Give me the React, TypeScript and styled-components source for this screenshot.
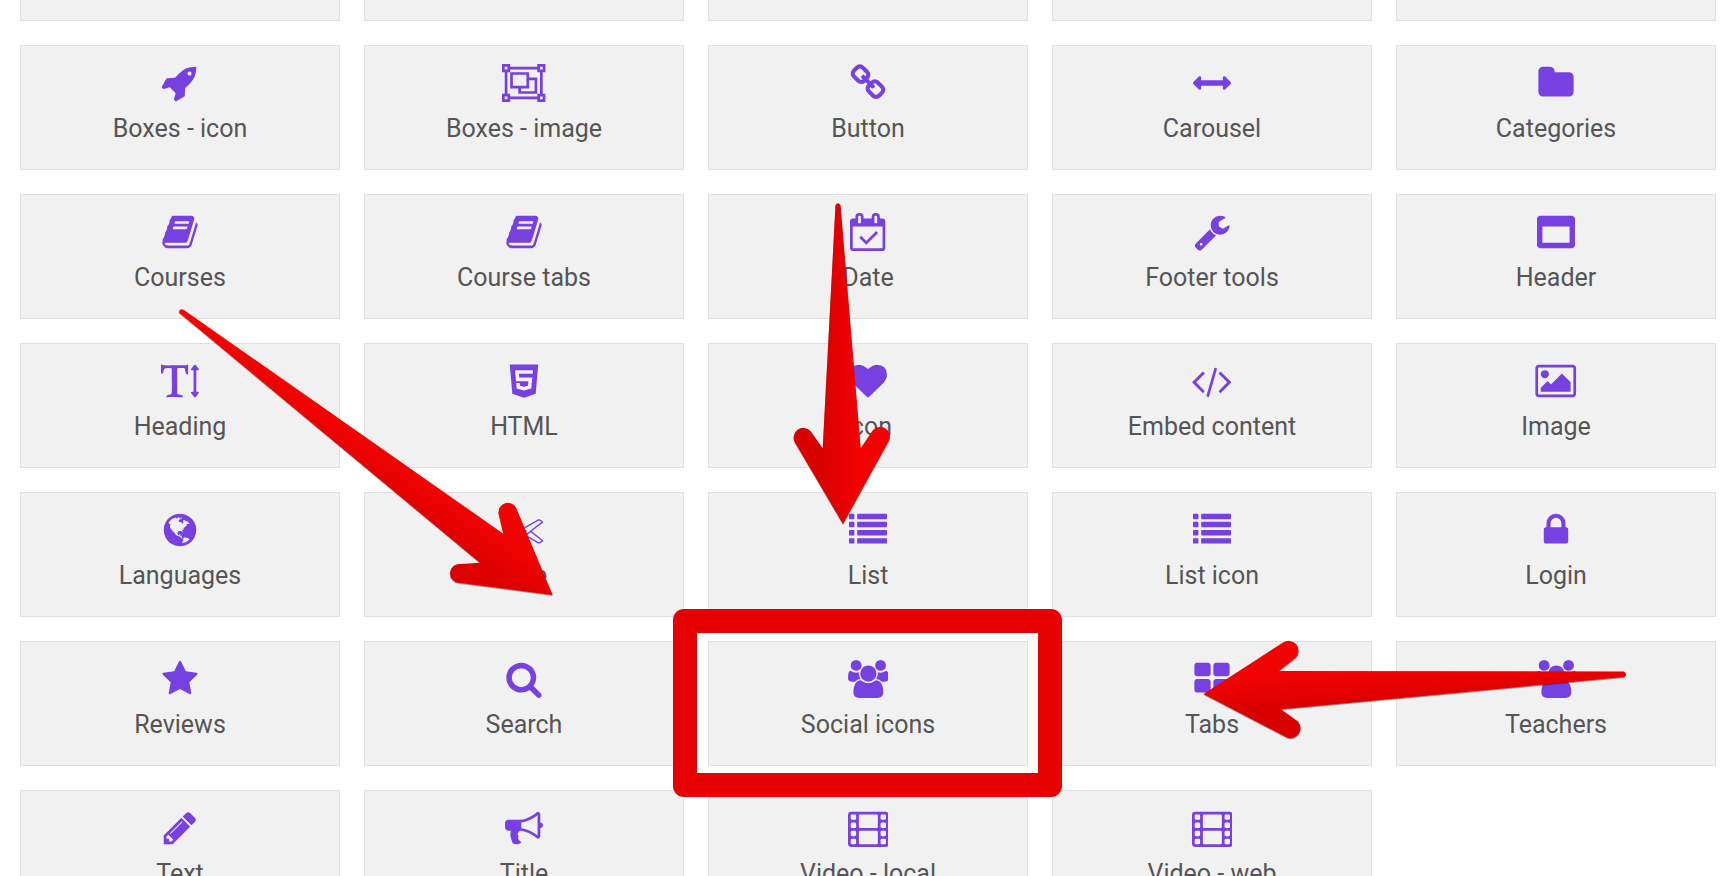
import React from "react";
import styled, { createGlobalStyle } from "styled-components";
import { FaHtml5 } from "react-icons/fa";

const GlobalStyle = createGlobalStyle`
  *, *::before, *::after { box-sizing: border-box; }
  html, body { margin: 0; padding: 0; background: #ffffff; }
  body { font-family: Roboto, "Liberation Sans", sans-serif; color: #555555; }
`;

const Viewport = styled.main`
  position: relative;
  height: 100vh;
  overflow: hidden;
`;

/* The picker is scrolled so that its first row is mostly above the fold. */
const WidgetGrid = styled.div`
  display: grid;
  grid-template-columns: repeat(5, minmax(0, 1fr));
  grid-auto-rows: 125px;
  gap: 24px;
  margin-top: -104px;
  padding: 0 18px 24px 20px;
`;

const WidgetCard = styled.button`
  position: relative;
  display: flex;
  flex-direction: column;
  align-items: center;
  gap: 12px;
  margin: 0;
  padding: 18px 8px;
  border: 1px solid #e0e0e0;
  border-radius: 0;
  background: #f1f1f1;
  color: inherit;
  font-family: inherit;
  cursor: pointer;
`;

const WidgetIcon = styled.span`
  display: flex;
  height: 38px;
  color: #7641e0;

  svg {
    display: block;
    width: auto;
    height: 38px;
  }
`;

const WidgetLabel = styled.span`
  font-size: 25px;
  line-height: 30px;
  white-space: nowrap;
`;

const HighlightFrame = styled.span`
  position: absolute;
  inset: -33px -35px -32px -36px;
  z-index: 2;
  border: 24px solid #e60000;
  border-radius: 11px;
  pointer-events: none;
`;

const ArrowLayer = styled.svg`
  position: absolute;
  top: 0;
  left: 0;
  z-index: 3;
  pointer-events: none;
  filter: drop-shadow(0 1px 0 rgba(90, 0, 0, 0.45));
`;

type Glyph = { width: number; d: string };

const glyphs: Record<string, Glyph> = {
  rocket: {
    width: 1792,
    d: "M1440 448q0-40-28-68t-68-28-68 28-28 68 28 68 68 28 68-28 28-68zm224-288q0 249-75.5 430.5t-253.5 360.5q-81 80-195 176l-20 379q-2 16-16 26l-384 224q-7 4-16 4-12 0-23-9l-64-64q-13-14-8-32l85-276-281-281-276 85q-3 1-9 1-14 0-23-9l-64-64q-17-19-5-39l224-384q10-14 26-16l379-20q96-114 176-195 188-187 358-258t431-71q14 0 24 9.5t10 22.5z",
  },
  objectGroup: {
    width: 2048,
    d: "M2048 384h-128v1024h128v384h-384v-128h-1280v128h-384v-384h128v-1024h-128v-384h384v128h1280v-128h384v384zm-256-256v128h128v-128h-128zm-1664 0v128h128v-128h-128zm128 1536v-128h-128v128h128zm1408-128v-128h128v-1024h-128v-128h-1280v128h-128v1024h128v128h1280zm256 128v-128h-128v128h128zm-640-1024h384v768h-896v-256h-384v-768h896v256zm-768 384h640v-512h-640v512zm1024 256v-512h-256v384h-384v128h640z",
  },
  link: {
    width: 1792,
    d: "M1520 1216q0-40-28-68l-208-208q-28-28-68-28-42 0-72 32 3 3 19 18.5t21.5 21.5 15 19 13 25.5 3.5 27.5q0 40-28 68t-68 28q-15 0-27.5-3.5t-25.5-13-19-15-21.5-21.5-18.5-19q-33 31-33 73 0 40 28 68l206 207q27 27 68 27 40 0 68-26l147-146q28-28 28-67zm-703-705q0-40-28-68l-206-207q-28-28-68-28-39 0-68 27l-147 146q-28 28-28 67 0 40 28 68l208 208q27 27 68 27 42 0 72-31-3-3-19-18.5t-21.5-21.5-15-19-13-25.5-3.5-27.5q0-40 28-68t68-28q15 0 27.5 3.5t25.5 13 19 15 21.5 21.5 18.5 19q33-31 33-73zm895 705q0 120-85 203l-147 146q-83 83-203 83-121 0-204-85l-206-207q-83-83-83-203 0-123 88-209l-88-88q-86 88-208 88-120 0-204-84l-208-208q-84-84-84-204t85-203l147-146q83-83 203-83 121 0 204 85l206 207q83 83 83 203 0 123-88 209l88 88q86-88 208-88 120 0 204 84l208 208q84 84 84 204z",
  },
  arrows: {
    width: 1792,
    d: "M1792 896q0 26-19 45l-256 256q-19 19-45 19t-45-19-19-45v-128h-1024v128q0 26-19 45t-45 19-45-19l-256-256q-19-19-19-45t19-45l256-256q19-19 45-19t45 19 19 45v128h1024v-128q0-26 19-45t45-19 45 19l256 256q19 19 19 45z",
  },
  folder: {
    width: 1792,
    d: "M1728 608v704q0 92-66 158t-158 66h-1216q-92 0-158-66t-66-158v-960q0-92 66-158t158-66h320q92 0 158 66t66 158v32h672q92 0 158 66t66 158z",
  },
  book: {
    width: 1792,
    d: "M1703 478q40 57 18 129l-275 906q-19 64-76.5 107.5t-122.5 43.5h-923q-77 0-148.5-53.5t-99.5-131.5q-24-67-2-127 0-4 3-27t4-37q1-8-3-21.5t-3-19.5q2-11 8-21t16.5-23.5 16.5-23.5q23-38 45-91.5t30-91.5q3-10 .5-30t-.5-28q3-11 17-28t17-23q21-36 42-92t25-90q1-9-2.5-32t.5-28q4-13 22-30.5t22-22.5q19-26 42.5-84.5t27.5-96.5q1-8-3-25.5t-2-26.5q2-8 9-18t18-23 17-21q8-12 16.5-30.5t15-35 16-36 19.5-32 26.5-23.5 36-11.5 47.5 5.5l-1 3q38-9 51-9h761q74 0 114 56t18 130l-274 906q-36 119-71.5 153.5t-128.5 34.5h-869q-27 0-38 15-11 16-1 43 24 70 144 70h923q29 0 56-15.5t35-41.5l300-987q7-22 5-57 38 15 59 43zm-1064 2q-4 13 2 22.5t20 9.5h608q13 0 25.5-9.5t16.5-22.5l21-64q4-13-2-22.5t-20-9.5h-608q-13 0-25.5 9.5t-16.5 22.5zm-83 256q-4 13 2 22.5t20 9.5h608q13 0 25.5-9.5t16.5-22.5l21-64q4-13-2-22.5t-20-9.5h-608q-13 0-25.5 9.5t-16.5 22.5z",
  },
  calendar: {
    width: 1664,
    d: "M1303 964l-512 512q-10 9-23 9t-23-9l-288-288q-9-10-9-23t9-22l46-46q9-9 22-9t23 9l220 220 444-444q10-9 23-9t22 9l46 46q9 9 9 22t-9 23zm-1175 700h1408v-1024h-1408v1024zm384-1216v-288q0-14-9-23t-23-9h-64q-14 0-23 9t-9 23v288q0 14 9 23t23 9h64q14 0 23-9t9-23zm768 0v-288q0-14-9-23t-23-9h-64q-14 0-23 9t-9 23v288q0 14 9 23t23 9h64q14 0 23-9t9-23zm384-64v1280q0 52-38 90t-90 38h-1408q-52 0-90-38t-38-90v-1280q0-52 38-90t90-38h128v-96q0-66 47-113t113-47h64q66 0 113 47t47 113v96h384v-96q0-66 47-113t113-47h64q66 0 113 47t47 113v96h128q52 0 90 38t38 90z",
  },
  wrench: {
    width: 1792,
    d: "M448 1472q0-26-19-45t-45-19-45 19-19 45 19 45 45 19 45-19 19-45zm644-420l-682 682q-37 37-90 37-52 0-91-37l-106-108q-38-36-38-90 0-53 38-91l681-681q39 98 114.5 173.5t173.5 114.5zm634-435q0 39-23 106-47 134-164.5 217.5t-258.5 83.5q-185 0-316.5-131.5t-131.5-316.5 131.5-316.5 316.5-131.5q58 0 121.5 16.5t107.5 46.5q16 11 16 28t-16 28l-293 169v224l193 107q5-3 79-48.5t135.5-81 70.5-35.5q15 0 23.5 10t8.5 25z",
  },
  window: {
    width: 1792,
    d: "M256 1408h1280v-768h-1280v768zm1536-1120v1216q0 66-47 113t-113 47h-1472q-66 0-113-47t-47-113v-1216q0-66 47-113t113-47h1472q66 0 113 47t47 113z",
  },
  textHeight: {
    width: 1792,
    d: "M1744 1408q33 0 42 18.5t-11 44.5l-126 162q-20 26-49 26t-49-26l-126-162q-20-26-11-44.5t42-18.5h80v-1024h-80q-33 0-42-18.5t11-44.5l126-162q20-26 49-26t49 26l126 162q20 26 11 44.5t-42 18.5h-80v1024h80zm-1663-1279l54 27q12 5 211 5 44 0 132-2t132-2q36 0 107.5.5t107.5.5h293q6 0 21 .5t20.5 0 16-3 17.5-9 15-17.5l42-1q4 0 14 .5t14 .5q2 112 2 336 0 80-5 109-39 14-68 18-25-44-54-128-3-9-11-48t-14.5-73.5-7.5-35.5q-6-8-12-12.5t-15.5-6-13-2.5-18-.5-16.5.5q-17 0-66.5-.5t-74.5-.5-64 2-71 6q-9 81-8 136 0 94 2 388t2 455q0 16-2.5 71.5t0 91.5 12.5 69q40 21 124 42.5t120 37.5q5 40 5 50 0 14-3 29l-34 1q-76 2-218-8t-207-10q-50 0-151 9t-152 9q-3-51-3-52v-9q17-27 61.5-43t98.5-29 78-27q19-42 19-383 0-101-3-303t-3-303v-117q0-2 .5-15.5t.5-25-1-25.5-3-24-5-14q-11-12-162-12-33 0-93 12t-80 26q-19 13-34 72.5t-31.5 111-42.5 53.5q-42-26-56-44v-383z",
  },
  heart: {
    width: 1792,
    d: "M896 1664q-26 0-44-18l-624-602q-10-8-27.5-26t-55.5-65.5-68-97.5-53.5-121-23.5-138q0-220 127-344t351-124q62 0 126.5 21.5t120 58 95.5 68.5 76 68q36-36 76-68t95.5-68.5 120-58 126.5-21.5q224 0 351 124t127 344q0 221-229 450l-623 600q-18 18-44 18z",
  },
  code: {
    width: 2048,
    d: "M681 1399l-50 50q-10 10-23 10t-23-10l-466-466q-10-10-10-23t10-23l466-466q10-10 23-10t23 10l50 50q10 10 10 23t-10 23l-393 393 393 393q10 10 10 23t-10 23zm591-1067l-373 1291q-4 13-15.5 19.5t-23.5 2.5l-62-17q-13-4-19.5-15.5t-2.5-24.5l373-1291q4-13 15.5-19.5t23.5-2.5l62 17q13 4 19.5 15.5t2.5 24.5zm657 651l-466 466q-10 10-23 10t-23-10l-50-50q-10-10-10-23t10-23l393-393-393-393q-10-10-10-23t10-23l50-50q10-10 23-10t23 10l466 466q10 10 10 23t-10 23z",
  },
  image: {
    width: 2048,
    d: "M704 576q0 80-56 136t-136 56-136-56-56-136 56-136 136-56 136 56 56 136zm1024 384v448h-1408v-192l320-320 160 160 512-512zm96-704h-1600q-13 0-22.5 9.5t-9.5 22.5v1216q0 13 9.5 22.5t22.5 9.5h1600q13 0 22.5-9.5t9.5-22.5v-1216q0-13-9.5-22.5t-22.5-9.5zm160 32v1216q0 66-47 113t-113 47h-1600q-66 0-113-47t-47-113v-1216q0-66 47-113t113-47h1600q66 0 113 47t47 113z",
  },
  globe: {
    width: 1792,
    d: "M896 128q209 0 385.5 103t279.5 279.5 103 385.5-103 385.5-279.5 279.5-385.5 103-385.5-103-279.5-279.5-103-385.5 103-385.5 279.5-279.5 385.5-103zm274 521q-2 1-9.5 9.5t-13.5 9.5q2 0 4.5-5t5-11 3.5-7q6-7 22-15 14-6 52-12 34-8 51 11-2-2 9.5-13t14.5-12q3-2 15-4.5t15-7.5l2-22q-12 1-17.5-7t-6.5-21q0 2-6 8 0-7-4.5-8t-11.5 1-9 1q-10-3-15-7.5t-8-16.5-4-15q-2-5-9.5-11t-9.5-10q-1-2-2.5-5.5t-3-6.5-4-5.5-5.5-2.5-7 5-7.5 10-4.5 5q-3-2-6-1.5t-4.5 1-4.5 3-5 3.5q-3 2-8.5 3t-8.5 2q15-5-1-11-10-4-16-3 9-4 7.5-12t-8.5-14h5q-1-4-8.5-8.5t-17.5-8.5-13-6q-8-5-34-9.5t-33-.5q-5 6-4.5 10.5t4 14 3.5 12.5q1 6-5.5 13t-6.5 12q0 7 14 15.5t10 21.5q-3 8-16 16t-16 12q-5 8-1.5 18.5t10.5 16.5q2 2 1.5 4t-3.5 4.5-5.5 4-6.5 3.5l-3 2q-11 5-20.5-6t-13.5-26q-7-25-16-30-23-8-29 1-5-13-41-26-25-9-58-4 6-1 0-15-7-15-19-12 3-6 4-17.5t1-13.5q3-13 12-23 1-1 7-8.5t9.5-13.5.5-6q35 4 50-11 5-5 11.5-17t10.5-17q9-6 14-5.5t14.5 5.5 14.5 5q14 1 15.5-11t-7.5-20q12 1 3-17-4-7-8-9-12-4-27 5-8 4 2 8-1-1-9.5 10.5t-16.5 17.5-16-5q-1-1-5.5-13.5t-9.5-13.5q-8 0-16 15 3-8-11-15t-24-8q19-12-8-27-7-4-20.5-5t-19.5 4q-5 7-5.5 11.5t5 8 10.5 5.5 11.5 4 8.5 3q14 10 8 14-2 1-8.5 3.5t-11.5 4.5-6 4q-3 4 0 14t-2 14q-5-5-9-17.5t-7-16.5q7 9-25 6l-10-1q-4 0-16 2t-20.5 1-13.5-8q-4-8 0-20 1-4 4-2-4-3-11-9.5t-10-8.5q-46 15-94 41 6 1 12-1 5-2 13-6.5t10-5.5q34-14 42-7l5-5q14 16 20 25-7-4-30-1-20 6-22 12 7 12 5 18-4-3-11.5-10t-14.5-11-15-5q-16 0-22 1-146 80-235 222 7 7 12 8 4 1 5 9t2.5 11 11.5-3q9 8 3 19 1-1 44 27 19 17 21 21 3 11-10 18-1-2-9-9t-9-4q-3 5 .5 18.5t10.5 12.5q-7 0-9.5 16t-2.5 35.5-1 23.5l2 1q-3 12 5.5 34.5t21.5 19.5q-13 3 20 43 6 8 8 9 3 2 12 7.5t15 10 10 10.5q4 5 10 22.5t14 23.5q-2 6 9.5 20t10.5 23q-1 0-2.5 1t-2.5 1q3 7 15.5 14t15.5 13q1 3 2 10t3 11 8 2q2-20-24-62-15-25-17-29-3-5-5.5-15.5t-4.5-14.5q2 0 6 1.5t8.5 3.5 7.5 4 2 3q-3 7 2 17.5t12 18.5 17 19 12 13q6 6 14 19.5t0 13.5q9 0 20 10.5t17 19.5q5 8 8 26t5 24q2 7 8.5 13.5t12.5 9.5l16 8 13 7q5 2 18.5 10.5t21.5 11.5q10 4 16 4t14.5-2.5 13.5-3.5q15-2 29 15t21 21q36 19 55 11-2 1 .5 7.5t8 15.5 9 14.5 5.5 8.5q5 6 18 15t18 15q6-4 7-9-3 8 7 20t18 10q14-3 14-32-31 15-49-18 0-1-2.5-5.5t-4-8.5-2.5-8.5 0-7.5 5-3q9 0 10-3.5t-2-12.5-4-13q-1-8-11-20t-12-15q-5 9-16 8t-16-9q0 1-1.5 5.5t-1.5 6.5q-13 0-15-1 1-3 2.5-17.5t3.5-22.5q1-4 5.5-12t7.5-14.5 4-12.5-4.5-9.5-17.5-2.5q-19 1-26 20-1 3-3 10.5t-5 11.5-9 7q-7 3-24 2t-24-5q-13-8-22.5-29t-9.5-37q0-10 2.5-26.5t3-25-5.5-24.5q3-2 9-9.5t10-10.5q2-1 4.5-1.5t4.5 0 4-1.5 3-6q-1-1-4-3-3-3-4-3 7 3 28.5-1.5t27.5 1.5q15 11 22-2 0-1-2.5-9.5t-.5-13.5q5 27 29 9 3 3 15.5 5t17.5 5q3 2 7 5.5t5.5 4.5 5-.5 8.5-6.5q10 14 12 24 11 40 19 44 7 3 11 2t4.5-9.5 0-14-1.5-12.5l-1-8v-18l-1-8q-15-3-18.5-12t1.5-18.5 15-18.5q1-1 8-3.5t15.5-6.5 12.5-8q21-19 15-35 7 0 11-9-1 0-5-3t-7.5-5-4.5-2q9-5 2-16 5-3 7.5-11t7.5-10q9 12 21 2 8-8 1-16 5-7 20.5-10.5t18.5-9.5q7 2 8-2t1-12 3-12q4-5 15-9t13-5l17-11q3-4 0-4 18 2 31-11 10-11-6-20 3-6-3-9.5t-15-5.5q3-1 11.5-.5t10.5-1.5q15-10-7-16-17-5-43 12zm-163 877q206-36 351-189-3-3-12.5-4.5t-12.5-3.5q-18-7-24-8 1-7-2.5-13t-8-9-12.5-8-11-7q-2-2-7-6t-7-5.5-7.5-4.5-8.5-2-10 1l-3 1q-3 1-5.5 2.5t-5.5 3-4 3 0 2.5q-21-17-36-22-5-1-11-5.5t-10.5-7-10-1.5-11.5 7q-5 5-6 15t-2 13q-7-5 0-17.5t2-18.5q-3-6-10.5-4.5t-12 4.5-11.5 8.5-9 6.5-8.5 5.5-8.5 7.5q-3 4-6 12t-5 11q-2-4-11.5-6.5t-9.5-5.5q2 10 4 35t5 38q7 31-12 48-27 25-29 40-4 22 12 26 0 7-8 20.5t-7 21.5q0 6 2 16z",
  },
  scissors: {
    width: 1792,
    d: "M960 896q26 0 45 19t19 45-19 45-45 19-45-19-19-45 19-45 45-19zm300 64l507 398q28 20 25 56-5 35-35 51l-128 64q-13 7-29 7-17 0-31-8l-690-387-110 66q-8 4-12 5 14 49 10 97-7 77-56 147.5t-132 123.5q-132 84-277 84-136 0-222-78-90-84-79-207 7-76 56-147t131-124q132-84 278-84 83 0 151 31 9-13 22-22l122-73-122-73q-13-9-22-22-68 31-151 31-146 0-278-84-82-53-131-124t-56-147q-5-59 15.5-113t63.5-93q85-79 222-79 145 0 277 84 83 52 132 123t56 148q4 48-10 97 4 1 12 5l110 66 690-387q14-8 31-8 16 0 29 7l128 64q30 16 35 51 3 36-25 56zm-681-260q46-42 21-108t-106-117q-92-59-192-59-74 0-113 36-46 42-21 108t106 117q92 59 192 59 74 0 113-36zm-85 745q81-51 106-117t-21-108q-39-36-113-36-100 0-192 59-81 51-106 117t21 108q39 36 113 36 100 0 192-59zm178-613l96 58v-11q0-36 33-56l14-8-79-44-26 26q-3 3-10 11t-12 12q-2 2-4 3.5t-3 2.5zm224 224l96 32 736-576-128-64-768 431v113l-160 96 9 8q2 2 7 6 4 4 11 12t11 12l26 26zm704 416l128-64-520-408-177 138q-2 3-13 7z",
  },
  list: {
    width: 1792,
    d: [128, 512, 896, 1280]
      .map(
        (y) =>
          `M32 ${y}h192q32 0 32 32v192q0 32-32 32h-192q-32 0-32-32v-192q0-32 32-32z` +
          `M416 ${y}h1344q32 0 32 32v192q0 32-32 32h-1344q-32 0-32-32v-192q0-32 32-32z`
      )
      .join(""),
  },
  lock: {
    width: 1792,
    d: "M640 768h512v-192q0-106-75-181t-181-75-181 75-75 181v192zm832 96v576q0 40-28 68t-68 28h-960q-40 0-68-28t-28-68v-576q0-40 28-68t68-28h32v-192q0-184 132-316t316-132 316 132 132 316v192h32q40 0 68 28t28 68z",
  },
  star: {
    width: 1792,
    d: "M1728 647q0 22-26 48l-363 354 86 500q1 7 1 20 0 21-10.5 35.5t-30.5 14.5q-19 0-40-12l-449-236-449 236q-22 12-40 12-21 0-31.5-14.5t-10.5-35.5q0-6 2-20l86-500-364-354q-25-27-25-48 0-37 56-46l502-73 225-455q19-41 49-41t49 41l225 455 502 73q56 9 56 46z",
  },
  search: {
    width: 1792,
    d: "M1216 832q0-185-131.5-316.5t-316.5-131.5-316.5 131.5-131.5 316.5 131.5 316.5 316.5 131.5 316.5-131.5 131.5-316.5zm512 832q0 52-38 90t-90 38q-54 0-90-38l-343-342q-179 124-399 124-143 0-273.5-55.5t-225-150-150-225-55.5-273.5 55.5-273.5 150-225 225-150 273.5-55.5 273.5 55.5 225 150 150 225 55.5 273.5q0 220-124 399l343 343q37 37 37 90z",
  },
  users: {
    width: 1920,
    d: "M593 896q-162 5-265 128h-134q-82 0-138-40.5t-56-118.5q0-353 124-353 6 0 43.5 21t97.5 42.5 119 21.5q67 0 133-23-5 37-5 66 0 139 81 256zm1071 637q0 120-73 189.5t-194 69.5h-874q-121 0-194-69.5t-73-189.5q0-53 3.5-103.5t14-109 26.5-108.5 43-97.5 62-81 85.5-53.5 111.5-20q10 0 43 21.5t73 48 107 48 135 21.5 135-21.5 107-48 73-48 43-21.5q61 0 111.5 20t85.5 53.5 62 81 43 97.5 26.5 108.5 14 109 3.5 103.5zm-1024-1277q0 106-75 181t-181 75-181-75-75-181 75-181 181-75 181 75 75 181zm704 384q0 159-112.5 271.5t-271.5 112.5-271.5-112.5-112.5-271.5 112.5-271.5 271.5-112.5 271.5 112.5 112.5 271.5zm576 225q0 78-56 118.5t-138 40.5h-134q-103-123-265-128 81-117 81-256 0-29-5-66 66 23 133 23 59 0 119-21.5t97.5-42.5 43.5-21q124 0 124 353zm-128-609q0 106-75 181t-181 75-181-75-75-181 75-181 181-75 181 75 75 181z",
  },
  tiles: {
    width: 1792,
    d: "M832 1024v384q0 52-38 90t-90 38h-512q-52 0-90-38t-38-90v-384q0-52 38-90t90-38h512q52 0 90 38t38 90zm0-768v384q0 52-38 90t-90 38h-512q-52 0-90-38t-38-90v-384q0-52 38-90t90-38h512q52 0 90 38t38 90zm896 768v384q0 52-38 90t-90 38h-512q-52 0-90-38t-38-90v-384q0-52 38-90t90-38h512q52 0 90 38t38 90zm0-768v384q0 52-38 90t-90 38h-512q-52 0-90-38t-38-90v-384q0-52 38-90t90-38h512q52 0 90 38t38 90z",
  },
  pencil: {
    width: 1792,
    d: "M491 1536l91-91-235-235-91 91v107h128v128h107zm523-928q0-22-22-22-10 0-17 7l-542 542q-7 7-7 17 0 22 22 22 10 0 17-7l542-542q7-7 7-17zm-54-192l416 416-832 832h-416v-416zm683 96q0 53-37 90l-166 166-416-416 166-165q36-38 90-38 53 0 91 38l235 234q37 39 37 91z",
  },
  bullhorn: {
    width: 1792,
    d: "M1664 640q53 0 90.5 37.5t37.5 90.5-37.5 90.5-90.5 37.5v384q0 52-38 90t-90 38q-417-347-812-380-58 19-91 66t-31 100.5 40 92.5q-20 33-23 65.5t6 58 33.5 55 48 50 61.5 50.5q-29 58-111.5 83t-168.5 11.5-132-55.5q-7-23-29.5-87.5t-32-94.5-23-89-15-101 3.5-98.5 22-110.5h-122q-66 0-113-47t-47-113v-192q0-66 47-113t113-47h480q435 0 896-384 52 0 90 38t38 90v384zm-128 604v-954q-394 302-768 343v270q377 42 768 341z",
  },
  film: {
    width: 1920,
    d:
      "M160 128h1600q160 0 160 160v1344q0 160-160 160h-1600q-160 0-160-160v-1344q0-160 160-160z" +
      [128, 1536]
        .map((x) =>
          [256, 640, 1024, 1408]
            .map(
              (y) =>
                `M${x + 64} ${y}h128q64 0 64 64v128q0 64-64 64h-128q-64 0-64-64v-128q0-64 64-64z`
            )
            .join("")
        )
        .join("") +
      [256, 1024]
        .map(
          (y) =>
            `M576 ${y}h768q64 0 64 64v512q0 64-64 64h-768q-64 0-64-64v-512q0-64 64-64z`
        )
        .join(""),
  },
};

type Widget = { label: string; icon: string; highlighted?: boolean };

const widgets: Widget[] = [
  { label: "Boxes - icon", icon: "rocket" },
  { label: "Boxes - image", icon: "objectGroup" },
  { label: "Button", icon: "link" },
  { label: "Carousel", icon: "arrows" },
  { label: "Categories", icon: "folder" },
  { label: "Courses", icon: "book" },
  { label: "Course tabs", icon: "book" },
  { label: "Date", icon: "calendar" },
  { label: "Footer tools", icon: "wrench" },
  { label: "Header", icon: "window" },
  { label: "Heading", icon: "textHeight" },
  { label: "HTML", icon: "html5" },
  { label: "Icon", icon: "heart" },
  { label: "Embed content", icon: "code" },
  { label: "Image", icon: "image" },
  { label: "Languages", icon: "globe" },
  { label: "Line", icon: "scissors" },
  { label: "List", icon: "list" },
  { label: "List icon", icon: "list" },
  { label: "Login", icon: "lock" },
  { label: "Reviews", icon: "star" },
  { label: "Search", icon: "search" },
  { label: "Social icons", icon: "users", highlighted: true },
  { label: "Tabs", icon: "tiles" },
  { label: "Teachers", icon: "users" },
  { label: "Text", icon: "pencil" },
  { label: "Title", icon: "bullhorn" },
  { label: "Video - local", icon: "film" },
  { label: "Video - web", icon: "film" },
];

const offscreenCards = [0, 1, 2, 3, 4];

function Icon({ name }: { name: string }) {
  if (name === "html5") {
    return <FaHtml5 aria-hidden="true" />;
  }
  const glyph = glyphs[name];
  return (
    <svg viewBox={`0 0 ${glyph.width} 1792`} aria-hidden="true">
      <path d={glyph.d} fill="currentColor" fillRule={name === "film" ? "evenodd" : "nonzero"} />
    </svg>
  );
}

function Arrows() {
  return (
    <ArrowLayer width="1734" height="876" viewBox="0 0 1734 876" aria-hidden="true">
      <defs>
        <linearGradient id="down" gradientUnits="userSpaceOnUse" x1="822" y1="0" x2="862" y2="0">
          <stop offset="0" stopColor="#d90000" />
          <stop offset="0.5" stopColor="#e40000" />
          <stop offset="0.85" stopColor="#f20303" />
        </linearGradient>
        <linearGradient id="diagonal" gradientUnits="userSpaceOnUse" x1="480" y1="563" x2="503" y2="530">
          <stop offset="0" stopColor="#dc0000" />
          <stop offset="0.9" stopColor="#f20303" />
        </linearGradient>
        <linearGradient id="left" gradientUnits="userSpaceOnUse" x1="1281" y1="709" x2="1279" y2="671">
          <stop offset="0" stopColor="#d90000" />
          <stop offset="0.9" stopColor="#f20303" />
        </linearGradient>
      </defs>
      <path
        fill="url(#diagonal)"
        d="M179 312.5Q179.500 307.500 184 310L503.300 533.700L498.500 513A9.400 9.400 0 0 1 516 507.500L552.700 595L458.500 582.800A9.400 9.400 0 0 1 460.500 564L480 562.700Z"
      />
      <path
        fill="url(#down)"
        d="M835.500 205Q838 201.500 840.500 205L860.700 448.300L873 430A9.700 9.700 0 0 1 888.500 441.500L843 524L795 442.500A9.700 9.700 0 0 1 810.500 431L822.700 448.300Z"
      />
      <path
        fill="url(#left)"
        d="M1624 671.500Q1628 674.500 1624 677L1281 709.300L1298 721.500A10 10 0 0 1 1287 737.500L1203.500 694L1283 642.500A10 10 0 0 1 1296 657.500L1279 671Z"
      />
    </ArrowLayer>
  );
}

export default function App() {
  return (
    <>
      <GlobalStyle />
      <Viewport>
        <WidgetGrid>
          {offscreenCards.map((n) => (
            <WidgetCard key={n} as="div" />
          ))}
          {widgets.map(({ label, icon, highlighted }) => (
            <WidgetCard key={label} type="button">
              <WidgetIcon>
                <Icon name={icon} />
              </WidgetIcon>
              <WidgetLabel>{label}</WidgetLabel>
              {highlighted && <HighlightFrame />}
            </WidgetCard>
          ))}
        </WidgetGrid>
        <Arrows />
      </Viewport>
    </>
  );
}
